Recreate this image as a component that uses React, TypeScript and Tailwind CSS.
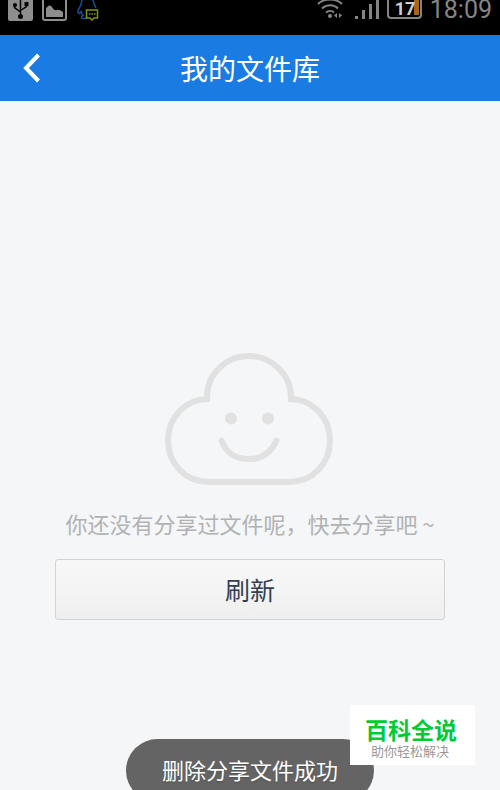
import type { ReactNode } from "react";

interface StatusIconProps {
  label: string;
  width: number;
  height: number;
  children: ReactNode;
}

function StatusIcon({ label, width, height, children }: StatusIconProps) {
  return (
    <svg role="img" aria-label={label} width={width} height={height} viewBox={`0 0 ${width} ${height}`} fill="none" className="shrink-0">
      {children}
    </svg>
  );
}

function StatusBar() {
  return (
    <div className="relative h-[35px] shrink-0 overflow-hidden bg-black text-[#858585]">
      <div className="flex h-[22px] items-start justify-between px-2">
        <div className="flex gap-2">
          <StatusIcon label="USB" width={26} height={21}>
            <path d="M0 0h25v19a2 2 0 0 1-2 2H2a2 2 0 0 1-2-2z" fill="#8e8e8e" />
            <path d="M12.500 0v16M6.500 5v2.500l6 4.500M18.500 4v2.500l-6 4" stroke="#000" strokeWidth="1.500" />
            <circle cx="12.500" cy="16.500" r="2.500" fill="#000" />
            <circle cx="7" cy="5" r="2" fill="#000" />
            <path d="M16.500 2h4v4h-4z" fill="#000" />
          </StatusIcon>
          <StatusIcon label="Picture" width={26} height={21}>
            <path d="M1 0v18a2 2 0 0 0 2 2h19a2 2 0 0 0 2-2V0" stroke="#8e8e8e" strokeWidth="2" />
            <path d="M4 8l3-2.500c2-.5 3 1 4 3 1 1.500 2 2 4 1.500 2-.5 3 .5 6 2v5H4z" fill="#8e8e8e" />
          </StatusIcon>
          <StatusIcon label="Message" width={26} height={21}>
            <path d="M6 0c-.5 4-1 6-3.500 9.500-1 2-.8 4 .5 4l2-2c.5 2 1 3 2 4-2 1-2 3 0 3h4M17 0c.5 3 1 5 3 8" stroke="#12509a" strokeWidth="1.500" />
            <path d="M10.500 10h11v8H18l-2 2-2-2h-3.500z" stroke="#7f9410" strokeWidth="1.500" />
            <path d="M13 14h1.500M15.500 14H17M18 14h1.500" stroke="#7f9410" strokeWidth="1.500" />
          </StatusIcon>
        </div>
        <div className="flex items-start">
          <StatusIcon label="Wi-Fi" width={38} height={21}>
            <path d="M1 4C7-2 19-2 25 4M5 8.500c4.500-4.500 12-4.500 16 0M9 12.500c2.500-2 6-2 8 0" stroke="#858585" strokeWidth="2" />
            <circle cx="13" cy="16" r="2" fill="#858585" />
            <path d="M20 13v5l-3-2.500zM22 13v5l3-2.500z" fill="#858585" />
          </StatusIcon>
          <StatusIcon label="Signal" width={32} height={21}>
            <path d="M0 16h3v3H0zM7 10h3v9H7zM14 4h3v15h-3zM21 0h3v19h-3z" fill="#858585" />
          </StatusIcon>
          <div className="relative mr-2 flex h-[19px] w-[35px] items-center rounded-b-sm border-2 border-t-0 border-[#858585] pl-[6px]">
            <span className="absolute bottom-[2px] right-px top-0 w-[5px] bg-[#a7651e]" />
            <span className="relative font-[Roboto] text-lg font-bold leading-4 text-[#d0d0d0]">17</span>
          </div>
          <span className="font-[Roboto] text-[25px] leading-5">18:09</span>
        </div>
      </div>
      {/* Ticker line that has just started to scroll in */}
      <p className="absolute left-12 top-8 whitespace-nowrap text-[19px] leading-6 text-[#333333]">正在保存屏幕截图</p>
    </div>
  );
}

function SmilingCloud() {
  return (
    <svg aria-hidden="true" width="170" height="132" viewBox="0 0 170 132" fill="none" stroke="#e1e1e1" strokeWidth="6">
      <path d="M42 48V44C42 21 61 3 83.500 3S126 21 126 44v4" />
      <path d="M45 46h-2C21 46 3 64 3 87.500S21 129 44 129h80c23 0 41-18 41-41.500S147 46 125 46h-2" />
      <path d="M56.500 87.500C61 100 71 106 84 106s22-6 27.500-18.500" strokeLinecap="round" />
      <circle cx="66" cy="65.500" r="6" fill="#e1e1e1" stroke="none" />
      <circle cx="103" cy="65.500" r="6" fill="#e1e1e1" stroke="none" />
    </svg>
  );
}

export default function App() {
  return (
    <div className="relative flex h-screen flex-col overflow-hidden bg-[#f4f6f8] font-['Noto_Sans_CJK_SC',sans-serif]">
      <StatusBar />

      <header className="grid h-[66px] shrink-0 grid-cols-[64px_1fr_64px] items-center bg-[#1a7ce2] text-white">
        <button type="button" aria-label="返回" className="flex h-full items-center pl-[22px]">
          <svg width="20" height="30" viewBox="0 0 20 30" fill="none" stroke="currentColor" strokeWidth="4">
            <path d="M16.500 2L4 15l12.500 13" />
          </svg>
        </button>
        <h1 className="text-center text-[28px] leading-10">我的文件库</h1>
      </header>

      <main className="flex flex-1 flex-col items-center px-[55px] pt-[252px]">
        <SmilingCloud />
        <p className="mt-[22px] whitespace-nowrap text-[22px] leading-8 text-[#b2b2b2]">你还没有分享过文件呢，快去分享吧 ~</p>
        <button
          type="button"
          className="mt-5 h-[61px] w-full rounded-[3px] border border-[#d2d3d4] bg-linear-to-b from-[#f8f8f8] via-[#f4f4f4] to-[#efefef] text-[25px] text-[#344052]"
        >
          刷新
        </button>
      </main>

      {/* Toast runs off the bottom edge of the screen */}
      <div
        role="status"
        className="absolute -bottom-3 left-1/2 h-[63px] -translate-x-1/2 whitespace-nowrap rounded-full bg-[#646464] px-9 text-[22px] leading-[60px] text-white text-shadow-sm"
      >
        删除分享文件成功
      </div>

      <aside className="absolute bottom-[25px] right-[25px] flex h-[60px] w-[125px] flex-col bg-white pl-[15px] pt-2">
        <strong className="text-[23px] font-bold leading-8 text-[#00cb36]">百科全说</strong>
        <span className="pl-[6px] text-[13px] leading-3 text-[#999999]">助你轻松解决</span>
      </aside>
    </div>
  );
}
